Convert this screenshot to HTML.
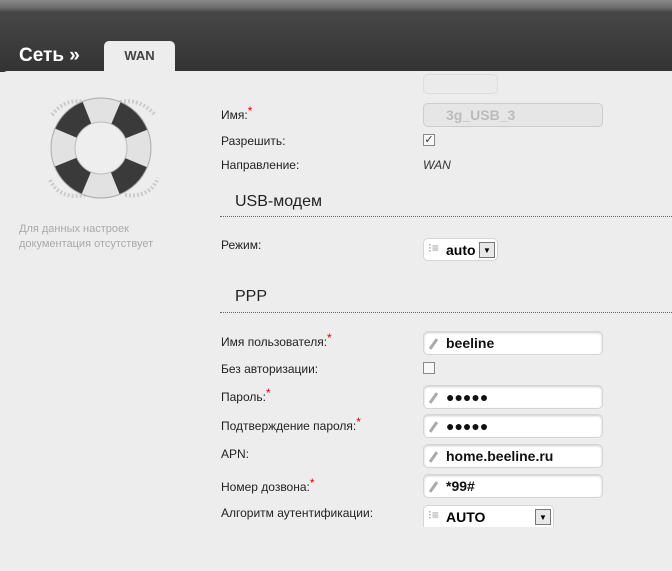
<!DOCTYPE html>
<html><head><meta charset="utf-8"><style>
*{margin:0;padding:0;box-sizing:border-box}
body{width:672px;height:571px;overflow:hidden;font-family:"Liberation Sans",sans-serif;background:#ededed;position:relative}
.top{position:absolute;left:0;top:0;width:672px;height:72px;background:linear-gradient(#8a8a8a 0,#6a6a6a 8px,#474747 12px,#3d3d3d 40px,#333 72px)}
.panel{position:absolute;left:0;top:71px;width:672px;height:500px;background:#ededed;border-top-left-radius:8px}
.title{position:absolute;left:19px;top:45px;color:#fff;font-weight:bold;font-size:19px}
.tab{position:absolute;left:104px;top:41px;width:71px;height:32px;background:#ededed;border-radius:5px 5px 0 0;font-weight:bold;font-size:13px;color:#444;text-align:center;padding-top:7px}
.l{position:absolute;left:221px;font-size:12px;color:#222}
.l i{color:#d00;font-style:normal;position:relative;top:-4px}
.h{position:absolute;left:235px;font-size:16px;color:#222}
.line{position:absolute;left:220px;width:452px;border-top:1px dotted #666}
.inp{position:absolute;left:423px;width:180px;height:24px;background:#fff;border:1px solid #d5d5d5;border-radius:5px;box-shadow:inset 0 1px 2px #ccc;font-weight:bold;font-size:14px;padding:3px 0 0 22px;color:#111}
.inp:before{content:"";position:absolute;left:8px;top:6px;width:3px;height:12px;background:#aaa;transform:rotate(35deg)}
.cb{position:absolute;left:423px;width:12px;height:12px;border:1px solid #888;background:#f8f8f8}
.sel{position:absolute;left:423px;height:23px;background:#fff;border:1px solid #d5d5d5;border-radius:5px;font-weight:bold;font-size:14px;padding:3px 0 0 22px}
.sel:before{content:"⁝≡";position:absolute;left:4px;top:2px;color:#999;font-weight:normal;font-size:12px}
.arr{position:absolute;width:16px;height:16px;border:1px solid #777;background:#e8e8e8;font-size:8px;text-align:center;line-height:15px;top:3px}
</style></head><body>
<div class="top"></div>
<div class="panel"></div>
<div class="title">Сеть »</div>
<div class="tab">WAN</div>
<svg style="position:absolute;left:40px;top:90px" width="125" height="115" viewBox="0 0 125 115">
<path d="M12 25 Q25 8 45 12 M80 12 Q100 8 115 25 M10 90 Q20 110 45 105 M85 105 Q110 108 118 88" stroke="#ccc" stroke-width="4" fill="none" stroke-dasharray="2 2"/>
<circle cx="61" cy="58" r="38" fill="none" stroke="#e2e2e2" stroke-width="24"/>
<circle cx="61" cy="58" r="38" fill="none" stroke="#3a3a3a" stroke-width="24" stroke-dasharray="30 29.7" stroke-dashoffset="-15"/>
<circle cx="61" cy="58" r="26" fill="#eee" stroke="#bbb"/>
<circle cx="61" cy="58" r="50" fill="none" stroke="#aaa"/>
</svg>
<div style="position:absolute;left:19px;top:222px;font-size:11px;color:#aaa;line-height:15px">Для данных настроек<br>документация отсутствует</div>
<div style="position:absolute;left:423px;top:74px;width:75px;height:20px;border:1px solid #ddd;border-radius:5px;background:#ebebeb"></div>
<div class="l" style="top:108px">Имя:<i>*</i></div>
<div style="position:absolute;left:423px;top:103px;width:180px;height:24px;border:1px solid #ccc;border-radius:5px;background:#e6e6e6;color:#bbb;font-weight:bold;font-size:14px;padding:3px 0 0 22px">3g_USB_3</div>
<div class="l" style="top:134px">Разрешить:</div>
<div class="cb" style="top:134px;text-align:center;font-size:11px;line-height:10px;color:#334">✓</div>
<div class="l" style="top:158px">Направление:</div>
<div style="position:absolute;left:423px;top:158px;font-size:12px;font-style:italic;color:#333">WAN</div>
<div class="h" style="top:193px">USB-модем</div>
<div class="line" style="top:216px"></div>
<div class="l" style="top:238px">Режим:</div>
<div class="sel" style="top:238px;width:75px">auto<div class="arr" style="left:55px">▼</div></div>
<div class="h" style="top:288px">PPP</div>
<div class="line" style="top:312px"></div>
<div class="l" style="top:335px">Имя пользователя:<i>*</i></div>
<div class="inp" style="top:331px">beeline</div>
<div class="l" style="top:362px">Без авторизации:</div>
<div class="cb" style="top:362px"></div>
<div class="l" style="top:390px">Пароль:<i>*</i></div>
<div class="inp" style="top:385px">●●●●●</div>
<div class="l" style="top:419px">Подтверждение пароля:<i>*</i></div>
<div class="inp" style="top:414px">●●●●●</div>
<div class="l" style="top:447px">APN:</div>
<div class="inp" style="top:444px">home.beeline.ru</div>
<div class="l" style="top:480px">Номер дозвона:<i>*</i></div>
<div class="inp" style="top:474px">*99#</div>
<div class="l" style="top:506px">Алгоритм аутентификации:</div>
<div class="sel" style="top:505px;width:131px;height:22px;border-bottom:none;border-radius:5px 5px 0 0">AUTO<div class="arr" style="left:111px">▼</div></div>
</body></html>
